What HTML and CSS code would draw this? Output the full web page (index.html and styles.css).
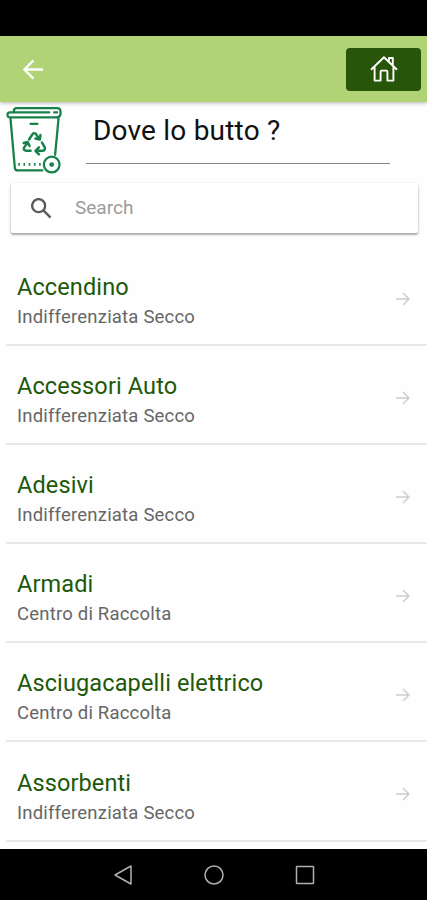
FILE: index.html
```html
<!DOCTYPE html>
<html lang="it">
<head>
<meta charset="utf-8">
<meta name="viewport" content="width=device-width">
<title>Dove lo butto ?</title>
<link rel="stylesheet" href="styles.css">
</head>
<body>
<div class="status"></div>
<header class="bar">
  <svg class="back" viewBox="0 0 22 22"><path d="M21 11H2M11 1.5L1.5 11L11 20.5"/></svg>
  <button class="home" aria-label="Home"><svg viewBox="0 0 28 28"><path d="M1.500 14.200L14 2.200L26.500 14.200M19 6.200V3H22.800V10.200M4.600 12V25.600H10.600V16.600Q10.600 15.600 11.600 15.600H16.400Q17.400 15.600 17.400 16.600V25.600H23.400V12"/></svg></button>
</header>
<main>
  <section class="hero">
    <svg class="bin" viewBox="0 0 58 70">
      <path d="M8 5Q8 2 11 2H52Q55.500 2 55.500 6V8Q55 11.500 51 11.500H4Q1.500 11.500 1.500 9Q1.500 6.500 4 6.500H44M49 6.500H52M4.500 12L9 63Q9.300 65.500 12 65.500H37M53.500 12L50 49.500M25 18H32"/>
      <path class="dash" d="M12.500 59.300H36"/>
      <circle cx="46.500" cy="59.500" r="8"/><circle class="dot" cx="46.500" cy="59.500" r="1.300"/>
      <path class="cycle" d="M23.500 34L27 28.500Q28.500 26.500 30.500 28.500L34 33.500M35 29.500L34.500 34L30 33M36.500 37L39.500 42Q40 45.500 37 45.500H30.500M33.500 42L30 45.500L33.500 49M25 45.500H20.500Q17 45 18.500 42L22 37M18 37.500L22 36.500L24 40.500"/>
    </svg>
    <h1>Dove lo butto ?</h1>
  </section>
  <label class="search">
    <svg viewBox="0 0 22 22"><circle cx="8" cy="8" r="6.800"/><path d="M12.800 12.800L20.500 20.500"/></svg>
    <input type="text" placeholder="Search">
  </label>
  <ul class="list">
    <li><div><h2>Accendino</h2><p>Indifferenziata Secco</p></div><svg viewBox="0 0 14 14"><path d="M0 7H13M7 1L13 7L7 13"/></svg></li>
    <li><div><h2>Accessori Auto</h2><p>Indifferenziata Secco</p></div><svg viewBox="0 0 14 14"><path d="M0 7H13M7 1L13 7L7 13"/></svg></li>
    <li><div><h2>Adesivi</h2><p>Indifferenziata Secco</p></div><svg viewBox="0 0 14 14"><path d="M0 7H13M7 1L13 7L7 13"/></svg></li>
    <li><div><h2>Armadi</h2><p>Centro di Raccolta</p></div><svg viewBox="0 0 14 14"><path d="M0 7H13M7 1L13 7L7 13"/></svg></li>
    <li><div><h2>Asciugacapelli elettrico</h2><p>Centro di Raccolta</p></div><svg viewBox="0 0 14 14"><path d="M0 7H13M7 1L13 7L7 13"/></svg></li>
    <li><div><h2>Assorbenti</h2><p>Indifferenziata Secco</p></div><svg viewBox="0 0 14 14"><path d="M0 7H13M7 1L13 7L7 13"/></svg></li>
  </ul>
</main>
<nav class="nav">
  <svg viewBox="0 0 20 20"><path d="M18 1V19L2 10Z"/></svg>
  <svg viewBox="0 0 20 20"><circle cx="10" cy="10" r="9"/></svg>
  <svg viewBox="0 0 20 20"><rect x="1.500" y="1.500" width="17" height="17" rx=".5"/></svg>
</nav>
</body>
</html>
```
FILE: styles.css
```css
* { box-sizing: border-box; margin: 0; padding: 0; }
body { width: 427px; height: 900px; overflow: hidden; display: flex; flex-direction: column; background: #fefefe; font-family: Roboto, sans-serif; }
svg { display: block; fill: none; flex: none; }
.status { height: 36px; background: #000; flex: none; }
.bar { height: 66px; flex: none; display: flex; align-items: center; justify-content: space-between; padding: 0 6px 0 23px; background: #afd375; box-shadow: 0 1px 4px rgba(0,0,0,.3); }
.back { width: 21px; height: 21px; stroke: #fff; stroke-width: 2.500; }
.home { width: 75px; height: 43px; border: 0; border-radius: 4px; background: #27560a; display: flex; align-items: center; justify-content: center; }
.home svg { width: 28px; height: 28px; stroke: #fff; stroke-width: 1.900; stroke-linejoin: round; stroke-linecap: round; }
main { flex: 1; min-height: 0; overflow: hidden; }
.hero { display: flex; height: 81px; padding: 4px 0 0 6px; }
.bin { width: 57px; height: 69px; margin-right: 1px; stroke: #16814a; stroke-width: 2.300; stroke-linecap: round; stroke-linejoin: round; }
.bin .dash { stroke-width: 3; stroke-linecap: butt; stroke-dasharray: 1.600 3.700; }
.bin .cycle { stroke-width: 2.500; }
.bin .dot { fill: #16814a; }
h1 { width: 304px; height: 58px; margin-left: 22px; padding: 5px 0 0 7px; border-bottom: 1.500px solid #858585; font-size: 28px; line-height: 40px; letter-spacing: .2px; font-weight: 400; color: #111; white-space: nowrap; }
.search { display: flex; align-items: center; height: 50px; margin: 0 9px 0 11px; padding-left: 20px; background: #fff; border-radius: 2px; box-shadow: 0 2px 2px rgba(0,0,0,.22), 0 1px 3px rgba(0,0,0,.22); }
.search svg { width: 21px; height: 21px; stroke: #5a5a5a; stroke-width: 2.500; }
.search input { border: 0; outline: 0; margin-left: 23px; width: 280px; background: none; font: 19px/24px Roboto, sans-serif; }
.search input::placeholder { color: #9b9b9b; opacity: 1; }
.list { list-style: none; margin: 14px 0 0 6px; }
.list li { height: 99.100px; display: flex; align-items: center; justify-content: space-between; padding: 6px 17px 0 11px; border-bottom: 2px solid #e8e8e8; }
.list li > div { padding-top: 7px; }
.list svg { width: 14px; height: 14px; stroke: #cdcdcd; stroke-width: 1.500; }
h2 { font-size: 23.500px; line-height: 30px; letter-spacing: .12px; font-weight: 400; color: #205808; }
p { font-size: 18.500px; line-height: 30px; letter-spacing: .2px; color: #666; }
.nav { height: 51px; flex: none; background: #000; display: flex; align-items: center; justify-content: center; gap: 71px; }
.nav svg { width: 20px; height: 20px; stroke: #b0b0b0; stroke-width: 1.500; stroke-linejoin: round; }
```
